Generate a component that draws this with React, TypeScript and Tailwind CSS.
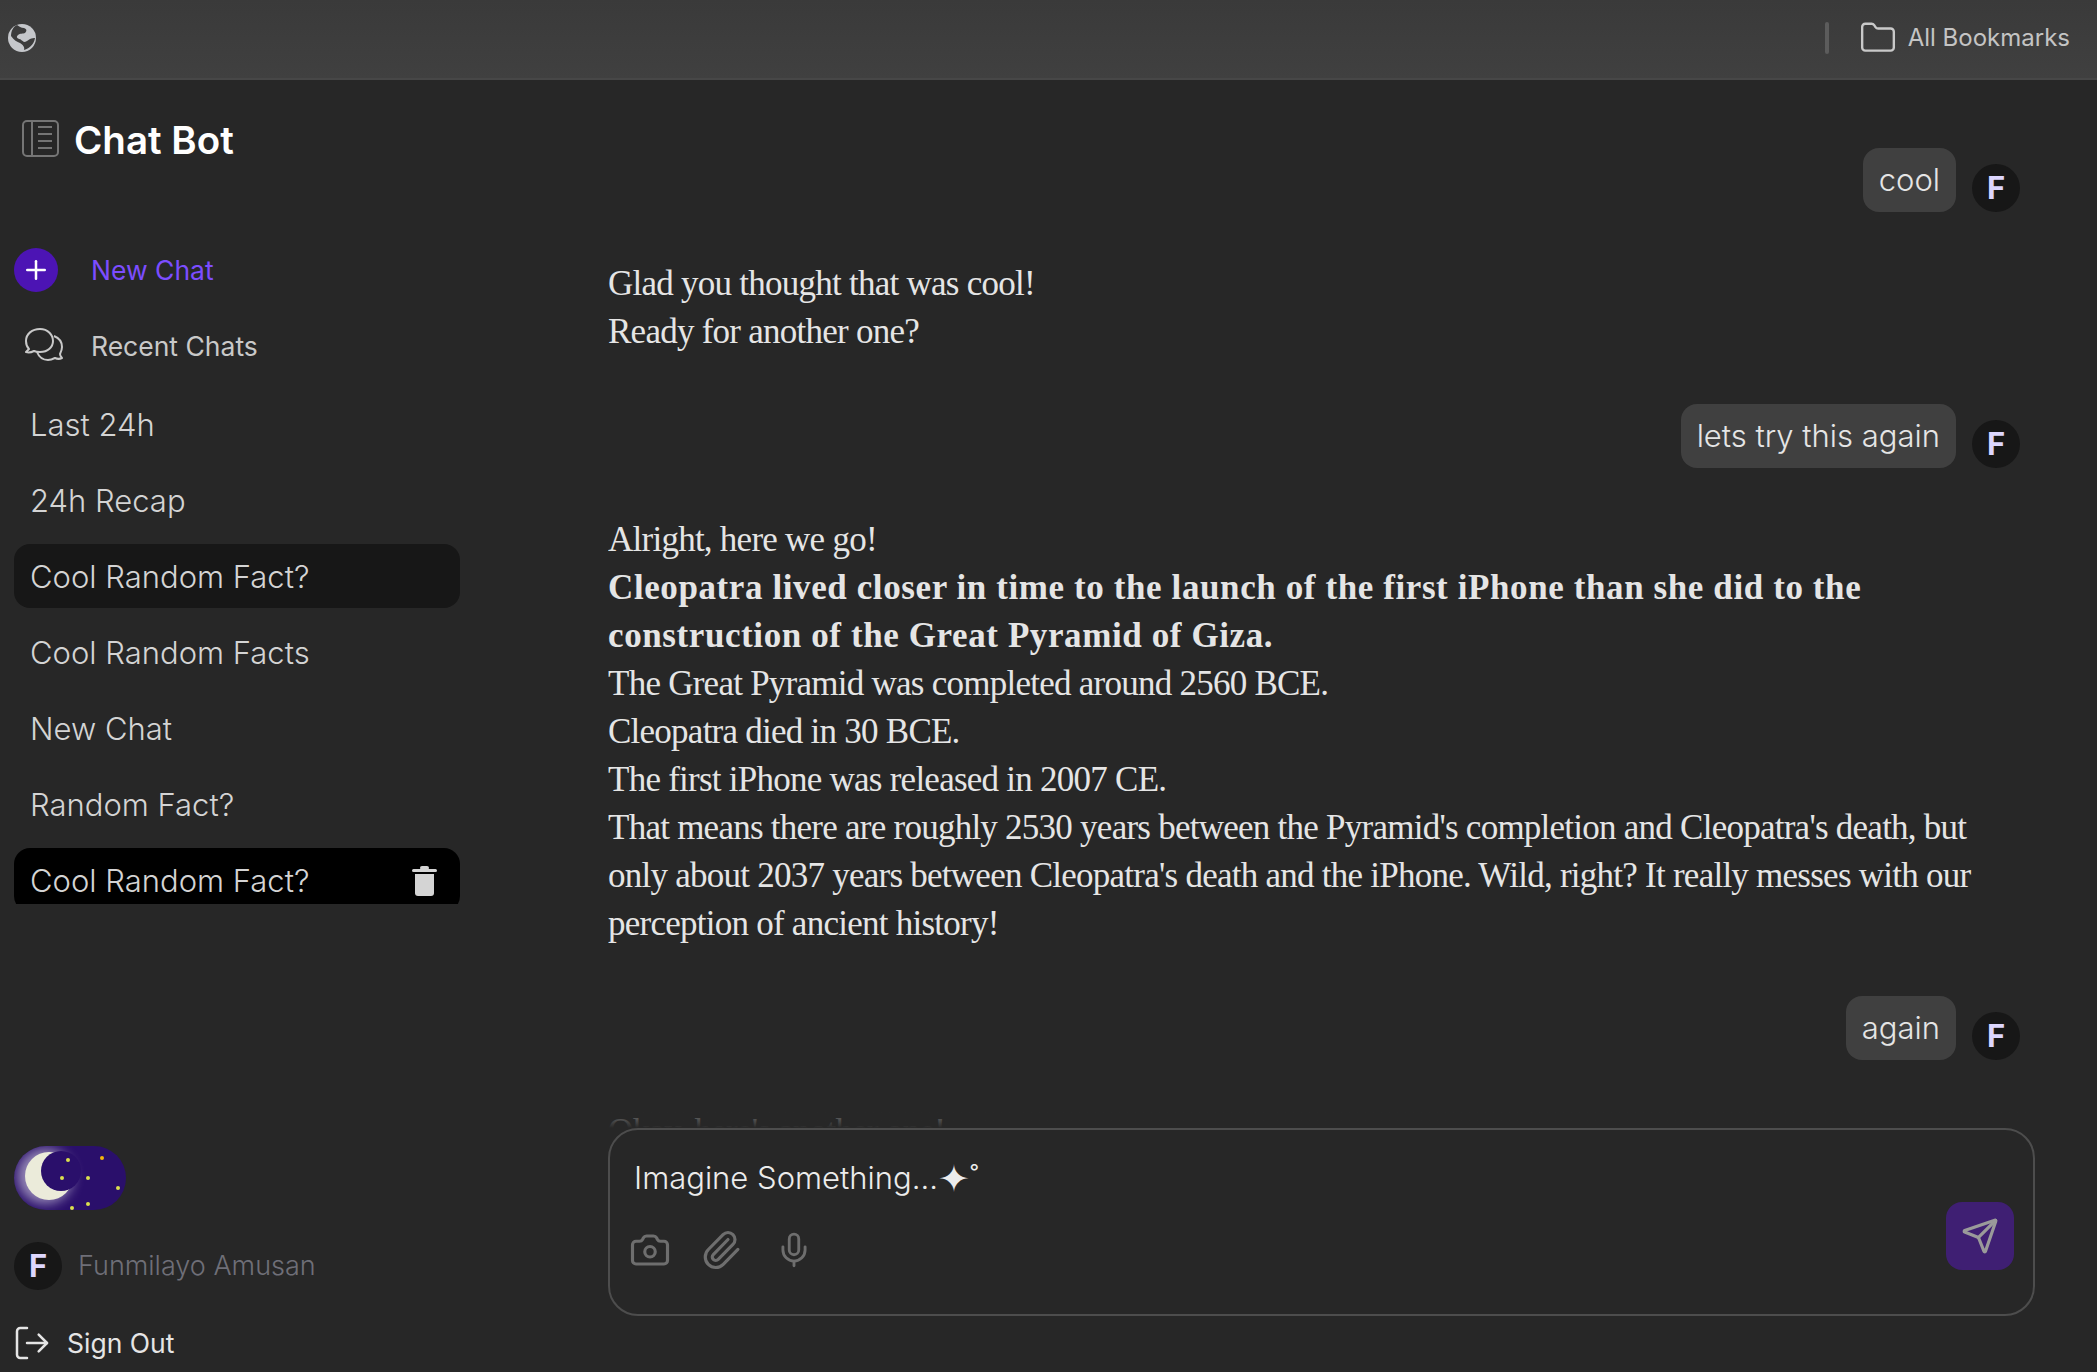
import { Camera, Folder, LogOut, Mic, Paperclip, Plus, Send } from 'lucide-react';

const chats = ['Last 24h', '24h Recap', 'Cool Random Fact?', 'Cool Random Facts', 'New Chat', 'Random Fact?'];

const sans = 'font-["Inter","Liberation_Sans",sans-serif]';

const GlobeIcon = () => (
  <svg width="28" height="28" viewBox="0 0 28 28">
    <circle cx="14" cy="14" r="14" fill="#c5c7cb" />
    <path d="M9 1c2 1 4 3 7 3 3 1 3 3 1 5-2 1-5 0-7 2-2 2-1 3 1 4 2 0 3 2 5 3 2 0 4-2 6-3 2-1 4-1 5-1-1 6-5 10-11 12 1-3-1-5-4-7-3-1-6-3-9-7C3 7 5 3 9 1z" fill="#3c3c3c" />
  </svg>
);

const SidebarIcon = () => (
  <svg width="37" height="37" viewBox="0 0 37 37" fill="none" stroke="#757575" strokeWidth="2" className="mt-[4px]">
    <rect x="1" y="1" width="35" height="35" rx="4" />
    <path d="M10 1v35" />
    <path d="M16 7h14M16 14h14M16 21h14M16 28h14" />
  </svg>
);

const ChatsIcon = () => (
  <svg width="40" height="38" viewBox="0 0 40 38" fill="none" stroke="#c9c9c9" strokeWidth="2" strokeLinejoin="round">
    <path d="M16 2C8 2 2 7 2 14c0 3 1 6 3 8-1 1-2 2-3 3 3 1 6 0 8-1 2 1 4 1 6 1 8 0 13-5 13-11S24 2 16 2z" />
    <path d="M30 9c5 2 8 6 8 11 0 3-1 5-2 7 0 2 1 3 2 4-2 1-5 1-7 0-2 1-4 2-7 2-5 0-9-3-11-8" />
  </svg>
);

const TrashIcon = () => (
  <svg width="25" height="30" viewBox="0 0 25 30" fill="#d4d4d4" className="mr-[7px]">
    <rect x="0" y="3" width="25" height="3" rx="1.5" />
    <rect x="8" y="0" width="9" height="4" rx="2" />
    <path d="M3 8h19v19a3 3 0 0 1-3 3H6a3 3 0 0 1-3-3z" />
  </svg>
);

const Avatar = ({ className = '' }: { className?: string }) => (
  <div className={`flex h-12 w-12 shrink-0 items-center justify-center rounded-full bg-[#171717] text-[31px] font-bold text-[#ddd6fe] ${className}`}>
    F
  </div>
);

const UserMessage = ({ text }: { text: string }) => (
  <div className={`flex justify-end gap-4 pr-[15px] tracking-normal ${sans}`}>
    <div className="rounded-[16px] bg-[#404040] px-4 py-[13px] text-[31px] leading-[38px] font-light text-[#e5e5e5]">{text}</div>
    <Avatar className="mt-4" />
  </div>
);

const ThemeToggle = () => (
  <div className="relative h-16 w-28 overflow-hidden rounded-full bg-[#2a0f6b]">
    <div className="absolute top-[6px] left-[11px] h-12 w-12 rounded-full bg-[#ebebda] shadow-[-4px_0_12px_4px_rgba(255,255,255,0.5)]" />
    <div className="absolute top-[5px] left-[27px] h-10 w-10 rounded-full bg-[#2a0f6b]" />
    <span className="absolute top-[12px] left-[52px] h-1 w-1 rounded-full bg-[#dbe04f]" />
    <span className="absolute top-[10px] left-[86px] h-1 w-1 rounded-full bg-[#f5b50a]" />
    <span className="absolute top-[30px] left-[46px] h-1 w-1 rounded-full bg-[#dbe04f]" />
    <span className="absolute top-[30px] left-[72px] h-1 w-1 rounded-full bg-[#dbe04f]" />
    <span className="absolute top-[40px] left-[102px] h-1 w-1 rounded-full bg-[#dbe04f]" />
    <span className="absolute top-[56px] left-[72px] h-1 w-1 rounded-full bg-[#dbe04f]" />
    <span className="absolute top-[60px] left-[56px] h-1 w-1 rounded-full bg-[#dbe04f]" />
  </div>
);

export default function App() {
  return (
    <div className={`flex h-[1372px] w-[2097px] flex-col overflow-hidden bg-[#272727] ${sans}`}>
      {/* Browser bar */}
      <header className="flex h-[80px] shrink-0 items-center justify-between border-b-2 border-[#474747] bg-gradient-to-b from-[#3a3a3a] to-[#404040] pr-[27px] pb-[2px] pl-2">
        <GlobeIcon />
        <div className="flex items-center">
          <div className="mr-[30px] h-8 w-1 rounded bg-[#5c5c5c]" />
          <Folder size={38} strokeWidth={1.5} className="mr-[11px] text-[#c9c9c9]" />
          <span className="text-[24px] text-[#c4c4c4]">All Bookmarks</span>
        </div>
      </header>

      <div className="flex min-h-0 flex-1">
        {/* Sidebar */}
        <aside className="flex w-[608px] shrink-0 flex-col pl-[14px]">
          <div className="mt-[36px] flex items-start gap-[15px] pl-[8px]">
            <SidebarIcon />
            <h1 className="text-[38.5px] leading-[48px] font-semibold text-white">Chat Bot</h1>
          </div>
          <div className="mt-[84px] flex items-center gap-[33px]">
            <div className="flex h-11 w-11 items-center justify-center rounded-full bg-[#4c14b4]">
              <Plus size={30} strokeWidth={2} className="text-white" />
            </div>
            <span className="text-[26.5px] leading-[36px] text-[#7c4dff]">New Chat</span>
          </div>
          <div className="mt-[35px] flex items-center gap-[27px] pl-[10px]">
            <ChatsIcon />
            <span className="text-[26.5px] leading-[36px] text-[#c9c9c9]">Recent Chats</span>
          </div>
          <div className="mt-[27px] h-[512px] w-[446px] overflow-hidden">
            <div className="flex flex-col gap-3">
              {chats.map((chat, i) => (
                <div
                  key={i}
                  className={`flex h-16 shrink-0 items-center rounded-[16px] px-4 pt-[2px] text-[31px] font-light text-[#d4d4d4] ${i === 2 ? 'bg-[#171717]' : ''}`}
                >
                  {chat}
                </div>
              ))}
              <div className="flex h-16 shrink-0 items-center justify-between rounded-[16px] bg-black px-4 pt-[2px] text-[31px] font-light text-[#d4d4d4]">
                Cool Random Fact?
                <TrashIcon />
              </div>
            </div>
          </div>
          <div className="mt-auto">
            <ThemeToggle />
            <div className="mt-8 flex items-center gap-4">
              <Avatar />
              <span className="text-[27px] font-light text-[#6f6f78]">Funmilayo Amusan</span>
            </div>
            <div className="mt-[33px] mb-[9px] -ml-[2px] flex items-center gap-[15px]">
              <LogOut size={40} strokeWidth={1.5} className="text-[#e5e5e5]" />
              <span className="text-[26.5px] leading-[36px] text-[#e5e5e5]">Sign Out</span>
            </div>
          </div>
        </aside>

        {/* Chat */}
        <main className="flex min-w-0 flex-1 flex-col pr-[62px]">
          <div className="relative min-h-0 flex-1 overflow-hidden pt-[68px] font-['Liberation_Serif',serif] text-[35px] leading-[48px] tracking-[-0.75px] text-[#e5e5e5]">
            <UserMessage text="cool" />
            <div className="mt-[48px] max-w-[1400px]">
              <p>Glad you thought that was cool!</p>
              <p>Ready for another one?</p>
            </div>
            <div className="mt-[48px]">
              <UserMessage text="lets try this again" />
            </div>
            <div className="mt-[48px] max-w-[1400px]">
              <p>Alright, here we go!</p>
              <p className="font-bold tracking-[0.6px]">
                Cleopatra lived closer in time to the launch of the first iPhone than she did to the construction of the Great Pyramid of Giza.
              </p>
              <p>The Great Pyramid was completed around 2560 BCE.</p>
              <p>Cleopatra died in 30 BCE.</p>
              <p>The first iPhone was released in 2007 CE.</p>
              <p>
                That means there are roughly 2530 years between the Pyramid's completion and Cleopatra's death, but only about 2037 years between Cleopatra's death and the iPhone. Wild, right? It really messes with our perception of ancient history!
              </p>
            </div>
            <div className="mt-[48px]">
              <UserMessage text="again" />
            </div>
            <div className="mt-[48px]">
              <p>Okay, here's another one!</p>
            </div>
            <div className="absolute right-0 bottom-0 left-0 h-[40px] bg-gradient-to-b from-[#272727]/0 to-[#272727]" />
          </div>

          <div className="mb-[56px] flex h-[188px] shrink-0 justify-between rounded-[30px] border-2 border-[#4d4d4d] pt-[26px] pr-[19px] pl-[19px]">
            <div>
              <div className="ml-[5px] flex h-[44px] items-center text-[31px] leading-[44px] font-light text-[#ececec]">
                Imagine Something...<span className="text-[38px] leading-[44px]">✦</span>˚
              </div>
              <div className="mt-[29px] flex items-center text-[#6e6e6e]">
                <Camera size={42} strokeWidth={1.8} className="mr-[29px]" />
                <Paperclip size={42} strokeWidth={1.8} className="mr-[33px]" />
                <Mic size={38} strokeWidth={1.8} />
              </div>
            </div>
            <div className="mt-[46px] flex h-[68px] w-[68px] items-center justify-center rounded-[16px] bg-[#3f1f73]">
              <Send size={38} strokeWidth={2} className="text-[#9a9a9a]" />
            </div>
          </div>
        </main>
      </div>
    </div>
  );
}
